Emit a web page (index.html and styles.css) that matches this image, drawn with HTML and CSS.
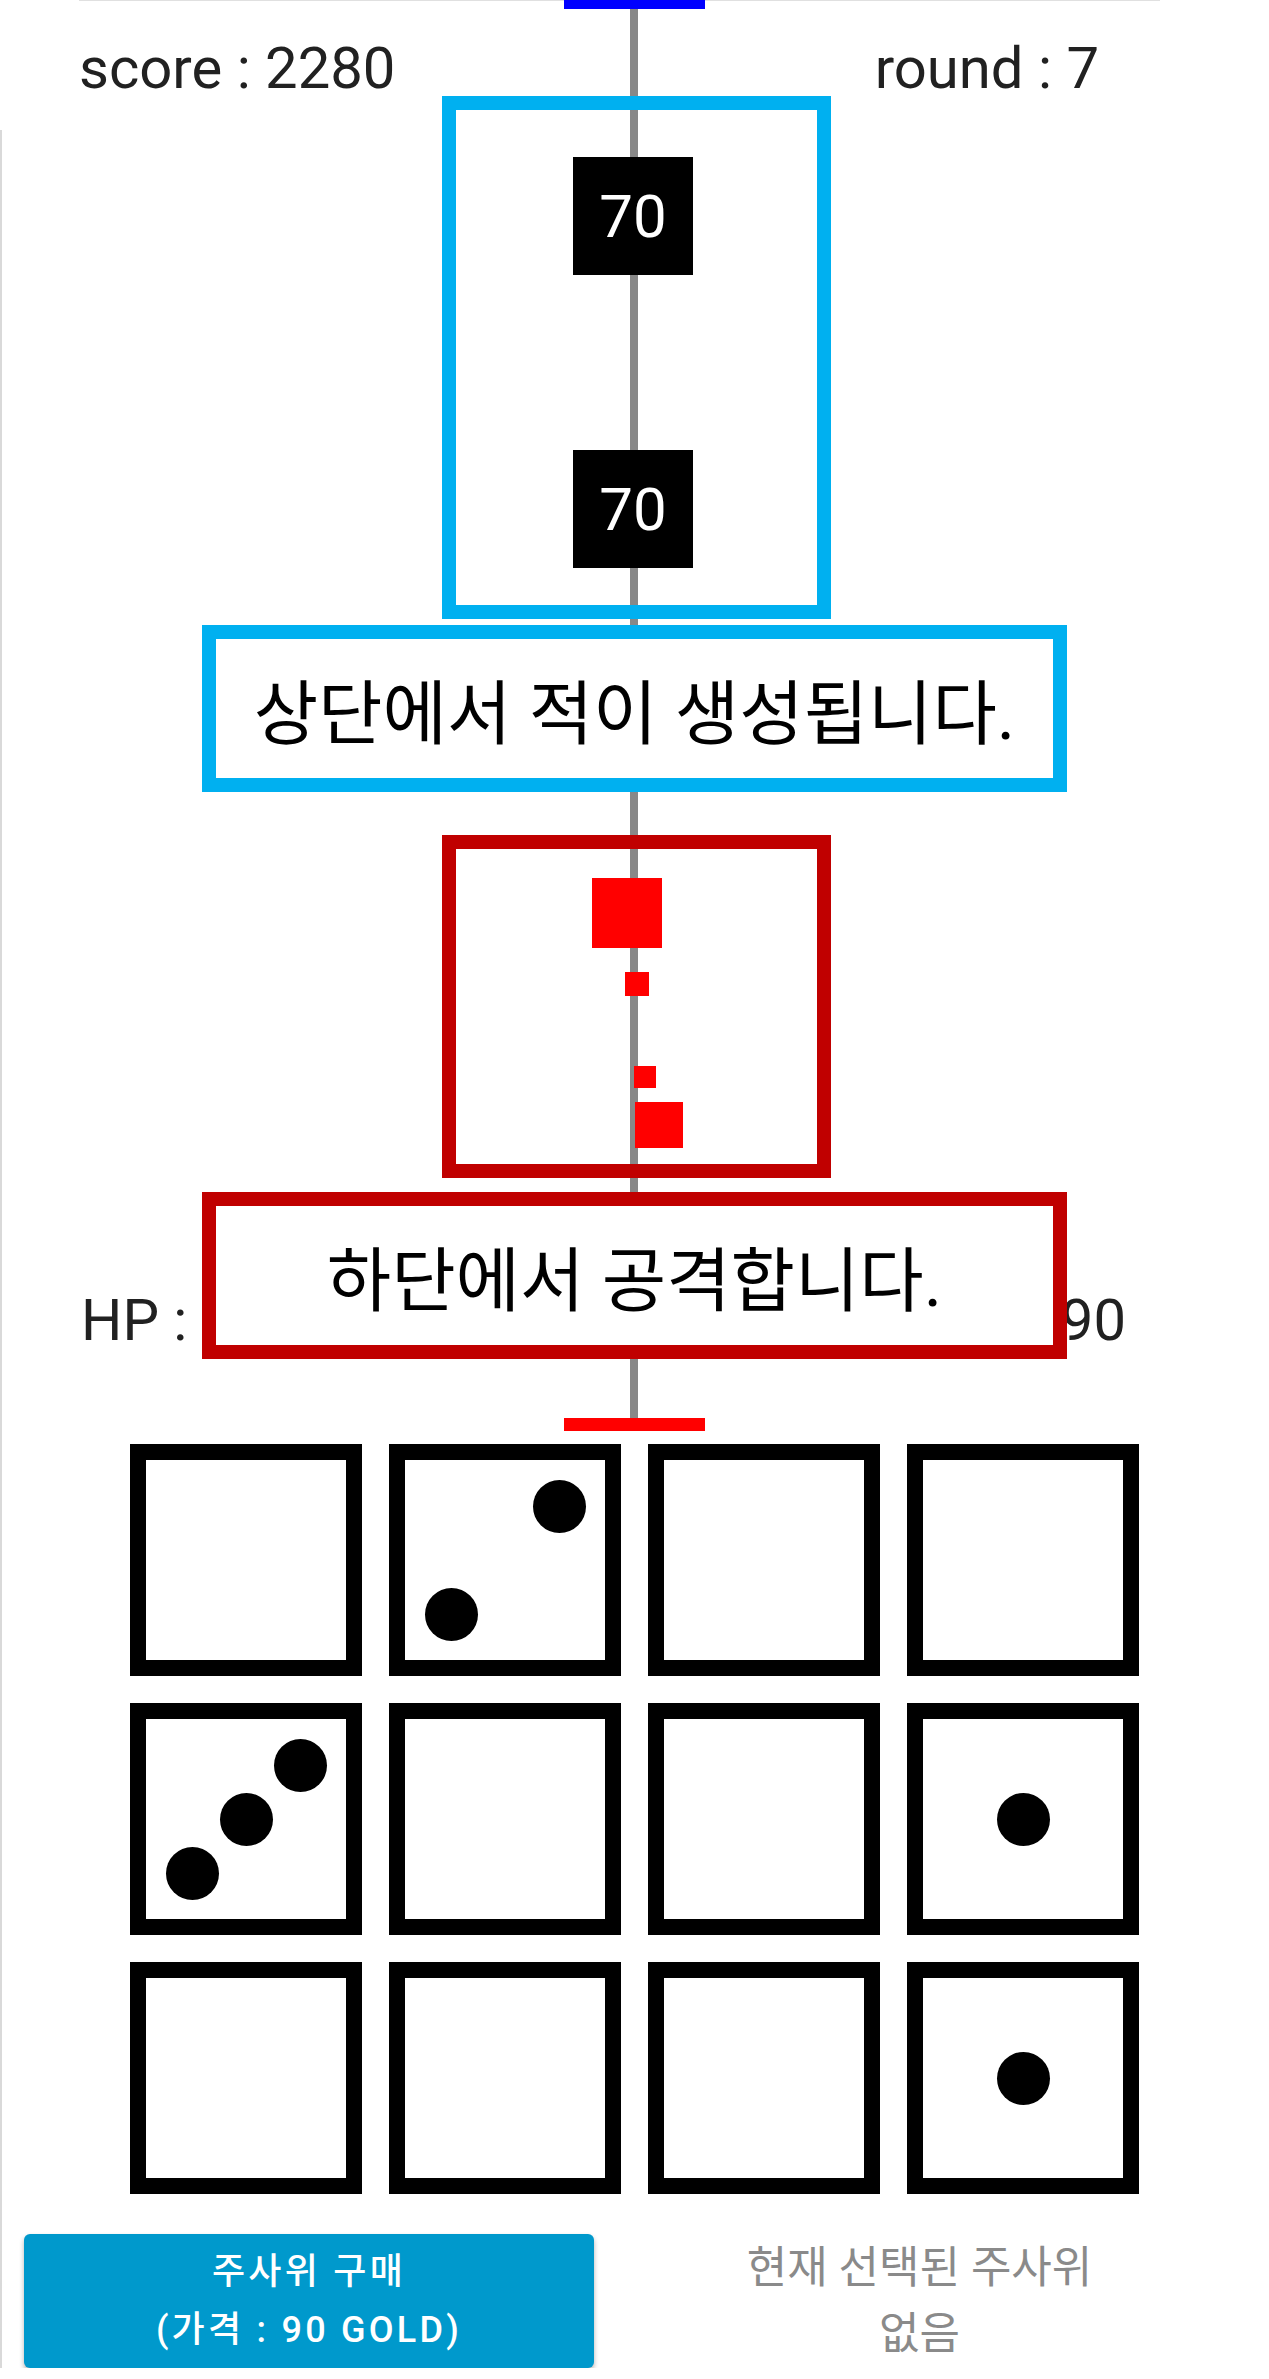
FILE: index.html
```html
<!DOCTYPE html>
<html lang="ko">
<head>
    <meta charset="UTF-8">
    <meta name="viewport" content="width=device-width, initial-scale=1.0">
    <title>주사위 디펜스</title>
    <link rel="stylesheet" href="styles.css">
</head>
<body>
    <div class="page">
        <div class="field">
            <div class="lane"></div>
            <div class="base enemy-base"></div>
            <div class="stat-row top-row">
                <div class="stat">score : 2280</div>
                <div class="stat">round : 7</div>
            </div>
            <div class="stat-row hp-row">
                <div class="stat">HP : 100</div>
                <div class="stat">gold : 90</div>
            </div>
            <div class="base player-base"></div>

            <!-- enemies and shots sit at their own spot on the lane -->
            <div class="enemy" style="top: 157px;">70</div>
            <div class="enemy" style="top: 450px;">70</div>
            <div class="shot" style="left: 592px; top: 878px; width: 70px; height: 70px;"></div>
            <div class="shot" style="left: 625px; top: 972px; width: 24px; height: 24px;"></div>
            <div class="shot" style="left: 634px; top: 1066px; width: 22px; height: 22px;"></div>
            <div class="shot" style="left: 635px; top: 1102px; width: 48px; height: 46px;"></div>

            <!-- tutorial callouts -->
            <div class="mark mark-blue zone-enemy"></div>
            <div class="callout callout-blue callout-top">상단에서 적이 생성됩니다.</div>
            <div class="mark mark-red zone-shot"></div>
            <div class="callout callout-red callout-bottom">하단에서 공격합니다.</div>
        </div>

        <div class="dice-grid">
            <div class="die"></div>
            <div class="die">
                <span class="pip p13"></span>
                <span class="pip p31"></span>
            </div>
            <div class="die"></div>
            <div class="die"></div>

            <div class="die">
                <span class="pip p13"></span>
                <span class="pip p22"></span>
                <span class="pip p31"></span>
            </div>
            <div class="die"></div>
            <div class="die"></div>
            <div class="die">
                <span class="pip p22"></span>
            </div>

            <div class="die"></div>
            <div class="die"></div>
            <div class="die"></div>
            <div class="die">
                <span class="pip p22"></span>
            </div>
        </div>

        <div class="footer">
            <button class="buy-btn">주사위 구매<br>(가격 : 90 GOLD)</button>
            <div class="selected">현재 선택된 주사위<br>없음</div>
        </div>
    </div>
</body>
</html>
```

FILE: styles.css
```css
body {
    margin: 0;
    background-color: #ffffff;
    font-family: Roboto, "Noto Sans CJK KR", sans-serif;
    color: #212121;
}
.page {
    position: relative;
    width: 1269px;
}
.page::before {
    content: "";
    position: absolute;
    left: 0;
    top: 130px;
    bottom: -20px;
    width: 2px;
    background-color: #d9d9d9;
}
.field {
    position: relative;
    height: 1431px;
    display: flex;
    flex-direction: column;
}
.field::before {
    content: "";
    position: absolute;
    left: 79px;
    top: 0;
    width: 1081px;
    height: 1px;
    background-color: #e0e0e0;
}
.lane {
    position: absolute;
    left: 630px;
    top: 9px;
    width: 8px;
    height: 1409px;
    background-color: #888888;
}
.base {
    position: relative;
    align-self: center;
    width: 141px;
    margin-right: 1px;
}
.enemy-base {
    height: 9px;
    background-color: #0000ff;
}
.player-base {
    height: 13px;
    margin-top: 69px;
    background-color: #ff0000;
}
.stat-row {
    display: flex;
    justify-content: space-between;
    font-size: 58px;
    line-height: 58px;
}
.top-row {
    margin-top: 30px;
    padding: 0 170px 0 79px;
}
.hp-row {
    margin-top: auto;
    padding: 0 143px 0 81px;
}
.enemy {
    position: absolute;
    left: 573px;
    width: 120px;
    height: 118px;
    display: flex;
    justify-content: center;
    align-items: center;
    background-color: #000000;
    color: #ffffff;
    font-size: 60px;
}
.shot {
    position: absolute;
    background-color: #ff0000;
}
.mark {
    position: absolute;
    left: 442px;
    width: 389px;
    box-sizing: border-box;
    border-width: 14px;
    border-style: solid;
}
.zone-enemy {
    top: 96px;
    height: 523px;
}
.zone-shot {
    top: 835px;
    height: 343px;
}
.callout {
    position: absolute;
    left: 202px;
    width: 865px;
    height: 167px;
    box-sizing: border-box;
    border-width: 14px;
    border-style: solid;
    background-color: #ffffff;
    display: flex;
    justify-content: center;
    align-items: center;
    color: #000000;
    font-size: 70px;
}
.mark-blue, .callout-blue {
    border-color: #00b0f0;
}
.mark-red, .callout-red {
    border-color: #c00000;
}
.callout-top {
    top: 625px;
}
.callout-bottom {
    top: 1192px;
}
.dice-grid {
    display: grid;
    grid-template-columns: repeat(4, 232px);
    grid-auto-rows: 232px;
    gap: 27px;
    margin-top: 13px;
    padding-left: 130px;
}
.die {
    box-sizing: border-box;
    border: 16px solid #000000;
    padding: 19px;
    display: grid;
    grid-template-columns: repeat(3, 54px);
    grid-template-rows: repeat(3, 54px);
    place-items: center;
}
.pip {
    width: 53px;
    height: 53px;
    border-radius: 50%;
    background-color: #000000;
}
.p13 { grid-area: 1 / 3; }
.p22 { grid-area: 2 / 2; }
.p31 { grid-area: 3 / 1; }
.footer {
    display: flex;
    align-items: center;
    margin-top: 40px;
    padding: 0 24px;
    height: 134px;
}
.buy-btn {
    width: 570px;
    height: 134px;
    border: none;
    border-radius: 6px;
    background-color: #0099cc;
    box-shadow: 0 3px 5px rgba(0, 0, 0, 0.3);
    color: #ffffff;
    font-family: Roboto, "Noto Sans CJK KR", sans-serif;
    font-size: 36px;
    font-weight: 500;
    letter-spacing: 0.09em;
    line-height: 58px;
    padding: 0;
}
.selected {
    flex: 1;
    text-align: center;
    color: #8a8a8a;
    font-size: 44px;
    line-height: 66px;
}
```
